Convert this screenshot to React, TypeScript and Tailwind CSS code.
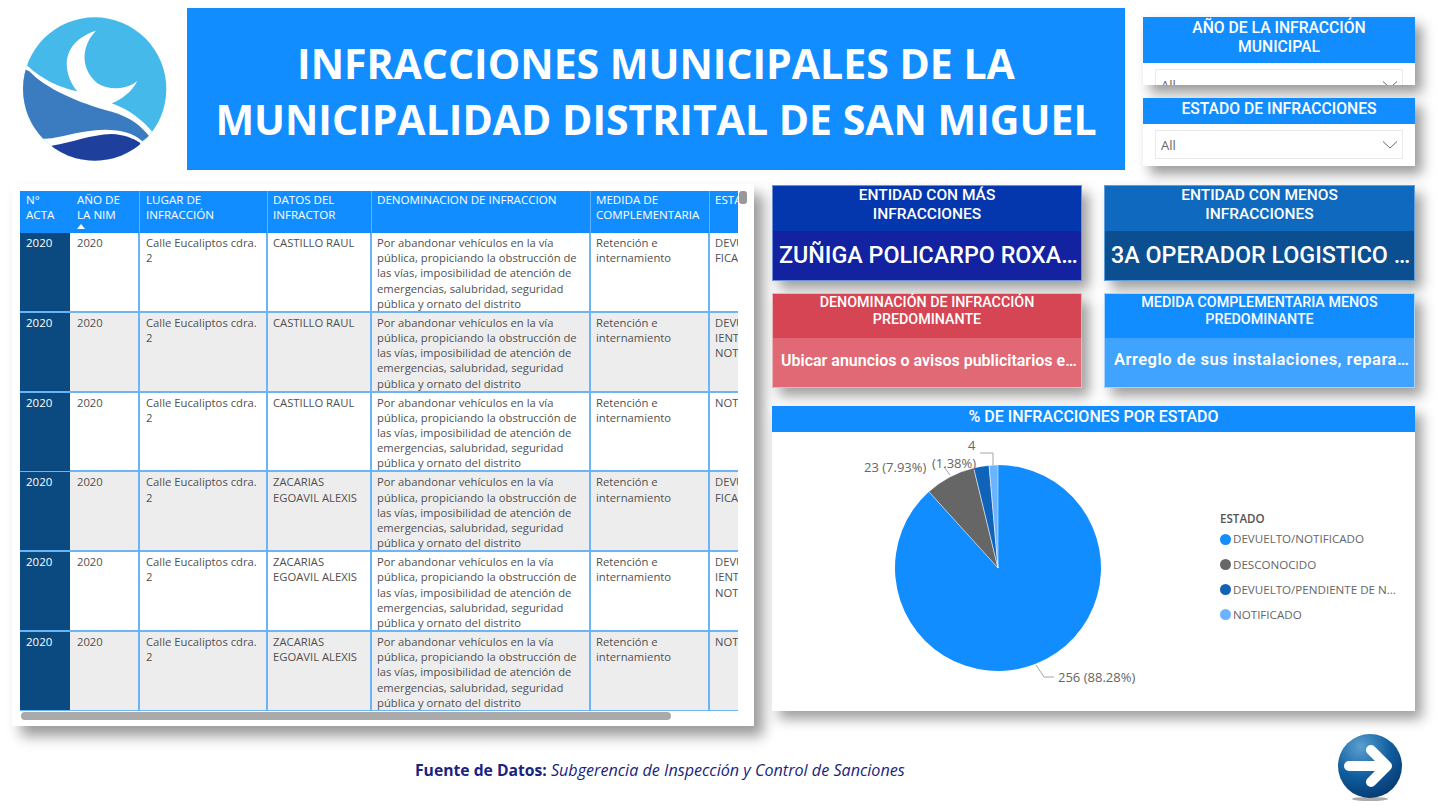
import React from 'react';

const segoe = "font-['Open_Sans',sans-serif]";
const din = "font-['Roboto',sans-serif]";

const rows = [
  { name: 'CASTILLO RAUL', estado: 'DEVUELTO/NOTI\nFICADO' },
  { name: 'CASTILLO RAUL', estado: 'DEVUELTO/PEND\nIENTE DE\nNOTIFICACION' },
  { name: 'CASTILLO RAUL', estado: 'NOTIFICADO' },
  { name: 'ZACARIAS EGOAVIL ALEXIS', estado: 'DEVUELTO/NOTI\nFICADO' },
  { name: 'ZACARIAS EGOAVIL ALEXIS', estado: 'DEVUELTO/PEND\nIENTE DE\nNOTIFICACION' },
  { name: 'ZACARIAS EGOAVIL ALEXIS', estado: 'NOTIFICADO' },
];

const denominacion =
  'Por abandonar vehículos en la vía pública, propiciando la obstrucción de las vías, imposibilidad de atención de emergencias, salubridad, seguridad pública y ornato del distrito';

const gridCols = 'grid grid-cols-[50px_70px_128px_104px_219px_119px_120px]';

function polar(r: number, pct: number) {
  const a = (pct / 100) * Math.PI * 2;
  return [226 + r * Math.sin(a), 136 - r * Math.cos(a)];
}

function slice(from: number, to: number) {
  const r = 103;
  const [x1, y1] = polar(r, from);
  const [x2, y2] = polar(r, to);
  const large = to - from > 50 ? 1 : 0;
  return `M226 136 L${x1} ${y1} A${r} ${r} 0 ${large} 1 ${x2} ${y2} Z`;
}

function Logo() {
  return (
    <svg viewBox="60 40 450 450" className="w-[150px] h-[150px] ml-[20px] mt-[14px]">
      <defs>
        <clipPath id="logoClip">
          <circle cx="284" cy="265" r="215" />
        </clipPath>
      </defs>
      <g clipPath="url(#logoClip)">
        <rect x="60" y="40" width="450" height="450" fill="#44b9ea" />
        <path
          d="M60 180 L82 195 C130 240 185 262 232 272 C185 215 180 125 288 90 C248 130 235 200 292 248 C330 272 385 265 412 240 C395 275 365 295 335 308 C385 325 430 360 458 395 L520 420 L520 490 L60 490 Z"
          fill="#fff"
        />
        <path
          d="M60 200 L88 212 C135 262 235 308 335 333 C395 350 425 378 447 406 L427 422 C385 382 310 380 230 397 C190 405 155 416 130 414 L60 400 Z"
          fill="#3b7cc0"
        />
        <path d="M155 435 C220 425 270 402 335 400 C370 402 400 412 421 427 L400 490 L180 490 Z" fill="#1f3f9c" />
      </g>
    </svg>
  );
}

function Slicer({ title, clipped }: { title: React.ReactNode; clipped?: boolean }) {
  return (
    <div className="h-[68px] bg-white overflow-hidden shadow-[7px_8px_12px_rgba(0,0,0,0.4)] flex flex-col">
      <div
        className={`bg-[#118dff] text-white text-center text-[15.7px] font-medium shrink-0 ${din} ${
          clipped ? 'h-[46px] pt-[2px] leading-[18.5px]' : 'h-[26px] leading-[21px]'
        }`}
      >
        {title}
      </div>
      <div
        className={`mx-3 border border-[#eaeaea] h-[29px] shrink-0 flex items-center justify-between pl-[5px] pr-[4px] text-[13px] text-[#666] ${segoe} ${
          clipped ? 'mt-[6px] pt-[5px]' : 'mt-[6px] pt-[3px]'
        }`}
      >
        <span>All</span>
        <svg width="16" height="10" viewBox="0 0 16 10" fill="none" stroke="#666" strokeWidth="1" className="-mt-[3px]">
          <path d="M1 1.5 L8 8 L15 1.5" />
        </svg>
      </div>
    </div>
  );
}

function Kpi({
  title,
  value,
  head,
  body,
  valueClass,
  border,
  heightClass,
  titleClass,
}: {
  title: React.ReactNode;
  value: string;
  head: string;
  body: string;
  valueClass: string;
  border: string;
  heightClass: string;
  titleClass: string;
}) {
  return (
    <div className={`flex flex-col border ${border} ${heightClass} ${din} shadow-[7px_8px_12px_rgba(0,0,0,0.38)] min-w-0`}>
      <div className={`${head} shrink-0 text-white text-center font-medium`}>
        <div className={titleClass}>{title}</div>
      </div>
      <div className={`${body} flex-1 min-h-0 flex items-center text-white min-w-0`}>
        <div className={`truncate w-full text-center ${valueClass}`}>{value}</div>
      </div>
    </div>
  );
}

function Pie() {
  return (
    <svg width="440" height="279" viewBox="0 0 440 279" className="shrink-0">
      <path d={slice(0, 88.28)} fill="#118dff" />
      <path d={slice(88.28, 96.21)} fill="#666666" stroke="#fff" strokeWidth="0.5" />
      <path d={slice(96.21, 98.62)} fill="#0f63b8" stroke="#fff" strokeWidth="0.5" />
      <path d={slice(98.62, 100)} fill="#6cb4ff" stroke="#fff" strokeWidth="0.5" />
      <g fill="none" stroke="#a6a6a6" strokeWidth="1">
        <path d="M208 21 H221 V34" />
        <path d="M172 35 L178 43" />
        <path d="M264 233 L272 245 H282" />
      </g>
      <g fill="#666666" fontFamily="'Open Sans', sans-serif" fontSize="13">
        <text x="92" y="40">23 (7.93%)</text>
        <text x="196" y="18">4</text>
        <text x="160" y="36">(1.38%)</text>
        <text x="286" y="250">256 (88.28%)</text>
      </g>
    </svg>
  );
}

const legend = [
  { label: 'DEVUELTO/NOTIFICADO', dot: 'bg-[#118dff]' },
  { label: 'DESCONOCIDO', dot: 'bg-[#666666]' },
  { label: 'DEVUELTO/PENDIENTE DE N...', dot: 'bg-[#0f63b8]' },
  { label: 'NOTIFICADO', dot: 'bg-[#6cb4ff]' },
];

export default function App() {
  return (
    <div className={`w-[1438px] h-[809px] bg-white overflow-hidden flex flex-col ${segoe}`}>
      <div className="h-[184px] shrink-0 flex">
        <div className="w-[187px] shrink-0">
          <Logo />
        </div>
        <div className="w-[938px] h-[162px] mt-2 pt-[3px] bg-[#118dff] text-white text-center text-[41px] font-bold leading-[56px] flex items-center justify-center shrink-0 whitespace-nowrap">
          <div>
            INFRACCIONES MUNICIPALES DE LA
            <br />
            MUNICIPALIDAD DISTRITAL DE SAN MIGUEL
          </div>
        </div>
        <div className="w-[272px] ml-[18px] pt-[17px] flex flex-col gap-[13px] shrink-0">
          <Slicer title={<>AÑO DE LA INFRACCIÓN<br />MUNICIPAL</>} clipped />
          <Slicer title="ESTADO DE INFRACCIONES" />
        </div>
      </div>

      <div className="flex pl-3 shrink-0">
        <div className="w-[742px] h-[542px] bg-white shadow-[9px_10px_13px_rgba(0,0,0,0.4)] pt-[7px] pl-[8px] shrink-0 flex flex-col">
          <div className="flex">
            <div className="w-[718px] h-[520px] overflow-hidden text-[11.25px] leading-[15.2px] text-[#505050]">
              <div className={`${gridCols} w-[810px] h-[42px] bg-[#118dff] text-white text-[11.6px]`}>
                {[
                  'N°\nACTA',
                  'AÑO DE\nLA NIM',
                  'LUGAR DE\nINFRACCIÓN',
                  'DATOS DEL\nINFRACTOR',
                  'DENOMINACION DE INFRACCION',
                  'MEDIDA DE\nCOMPLEMENTARIA',
                  'ESTADO',
                ].map((h, i) => (
                  <div
                    key={h}
                    className={`relative whitespace-pre-line pt-px border-r border-[#5fb0ff] ${i === 0 ? 'border-r-0 pl-[6px]' : ''} ${
                      i === 1 ? 'pl-[7px]' : ''
                    } ${i === 2 ? 'pl-[6px]' : ''} ${i > 2 ? 'pl-[5px]' : ''}`}
                  >
                    {h}
                    {i === 1 && (
                      <span className="absolute left-[7px] top-[33px] w-0 h-0 border-x-[4px] border-x-transparent border-b-[5px] border-b-white" />
                    )}
                  </div>
                ))}
              </div>
              {rows.map((r, i) => (
                <div
                  key={i}
                  className={`${gridCols} w-[810px] h-[79.8px] border-b-2 border-[#6cb4f8] ${i % 2 ? 'bg-[#eeeded]' : 'bg-white'}`}
                >
                  <div className="bg-[#0b4a80] text-white text-[11.5px] pl-[6px] pt-[2px]">2020</div>
                  <div className="border-r-2 border-[#6cb4f8] pl-[7px] pt-[2px]">2020</div>
                  <div className="border-r-2 border-[#6cb4f8] pl-[6px] pr-[8px] pt-[2px]">Calle Eucaliptos cdra. 2</div>
                  <div className="border-r-2 border-[#6cb4f8] pl-[5px] pt-[2px]">{r.name}</div>
                  <div className="border-r-2 border-[#6cb4f8] pl-[5px] pr-1 pt-[2px]">{denominacion}</div>
                  <div className="border-r-2 border-[#6cb4f8] pl-[5px] pt-[2px]">Retención e internamiento</div>
                  <div className="pl-[5px] pt-[2px] whitespace-pre-line">{r.estado}</div>
                </div>
              ))}
            </div>
            <div className="w-2 h-[13px] ml-px bg-[#999] rounded-[3px]" />
          </div>
          <div className="w-[650px] h-2 mt-px ml-px bg-[#aaaaaa] rounded-full" />
        </div>

        <div className="w-[643px] ml-[18px] pt-px flex flex-col shrink-0">
          <div className="grid grid-cols-[310px_311px] gap-x-[22px] gap-y-3">
            <Kpi
              title={<>ENTIDAD CON MÁS<br />INFRACCIONES</>}
              value="ZUÑIGA POLICARPO ROXANA"
              head="bg-[#0436ae] h-[45px]"
              body="bg-[#1222a0] pl-[6px]"
              border="border-[#6f8fd8]"
              heightClass="h-[96px]"
              titleClass="text-[15.5px] leading-[19px]"
              valueClass="text-[23.3px] font-medium"
            />
            <Kpi
              title={<>ENTIDAD CON MENOS<br />INFRACCIONES</>}
              value="3A OPERADOR LOGISTICO S.A.C."
              head="bg-[#0f6abf] h-[45px]"
              body="bg-[#0b4f90] pl-[6px]"
              border="border-[#5f9fd8]"
              heightClass="h-[96px]"
              titleClass="text-[15.5px] leading-[19px]"
              valueClass="text-[23.3px] font-medium"
            />
            <Kpi
              title={<>DENOMINACIÓN DE INFRACCIÓN<br />PREDOMINANTE</>}
              value="Ubicar anuncios o avisos publicitarios en la vía pública"
              head="bg-[#d64554] h-[44px]"
              body="bg-[#e06975] pb-[4px] pl-[8px] pr-[2px]"
              border="border-[#efb4ba]"
              heightClass="h-[95px]"
              titleClass="text-[14.3px] leading-[17px]"
              valueClass="text-[16px] font-semibold"
            />
            <Kpi
              title={<>MEDIDA COMPLEMENTARIA MENOS<br />PREDOMINANTE</>}
              value="Arreglo de sus instalaciones, reparaciones"
              head="bg-[#118dff] h-[44px]"
              body="bg-[#3fa3ff] pb-[4px] pl-[9px] pr-[2px]"
              border="border-[#a9d4ff]"
              heightClass="h-[95px]"
              titleClass="text-[14.3px] leading-[17px]"
              valueClass="text-[16.5px] font-semibold tracking-[0.5px]"
            />
          </div>
          <div className="mt-[18px] h-[305px] bg-white shadow-[7px_8px_12px_rgba(0,0,0,0.38)]">
            <div className={`h-[26px] bg-[#118dff] text-white text-center text-[16px] font-medium leading-[22px] ${din}`}>
              % DE INFRACCIONES POR ESTADO
            </div>
            <div className="flex">
              <Pie />
              <div className="ml-2 pt-[79px] text-[11.6px] text-[#666]">
                <div className="font-semibold text-[#555] h-[16px] leading-[16px] mb-[4px]">ESTADO</div>
                <div className="flex flex-col gap-[9.3px]">
                  {legend.map((l) => (
                    <div key={l.label} className="flex items-center gap-[2px] h-4 whitespace-nowrap">
                      <span className={`w-[11px] h-[11px] rounded-full ${l.dot}`} />
                      {l.label}
                    </div>
                  ))}
                </div>
              </div>
            </div>
          </div>
        </div>
      </div>

      <div className="flex pl-[415px] flex-1 min-h-0">
        <div className="pt-[33px] leading-[22px] text-[#1a237e] whitespace-nowrap">
          <span className="font-bold text-[15.7px]">Fuente de Datos: </span>
          <span className="italic text-[16.15px]">Subgerencia de Inspección y Control de Sanciones</span>
        </div>
        <svg width="72" height="74" viewBox="0 0 72 74" className="ml-auto mr-[32px] mt-[7px] shrink-0">
          <defs>
            <radialGradient id="btn" cx="0.35" cy="0.2" r="0.95">
              <stop offset="0" stopColor="#5b9fd0" />
              <stop offset="0.5" stopColor="#0f5d9e" />
              <stop offset="1" stopColor="#052f63" />
            </radialGradient>
          </defs>
          <ellipse cx="36" cy="66" rx="18" ry="2" fill="#888" opacity="0.7" />
          <circle cx="36" cy="33" r="32" fill="url(#btn)" />
          <path d="M15 33 H52 M37 17 L53 33 L37 49" fill="none" stroke="#fff" strokeWidth="10" strokeLinecap="round" strokeLinejoin="round" />
        </svg>
      </div>
    </div>
  );
}
